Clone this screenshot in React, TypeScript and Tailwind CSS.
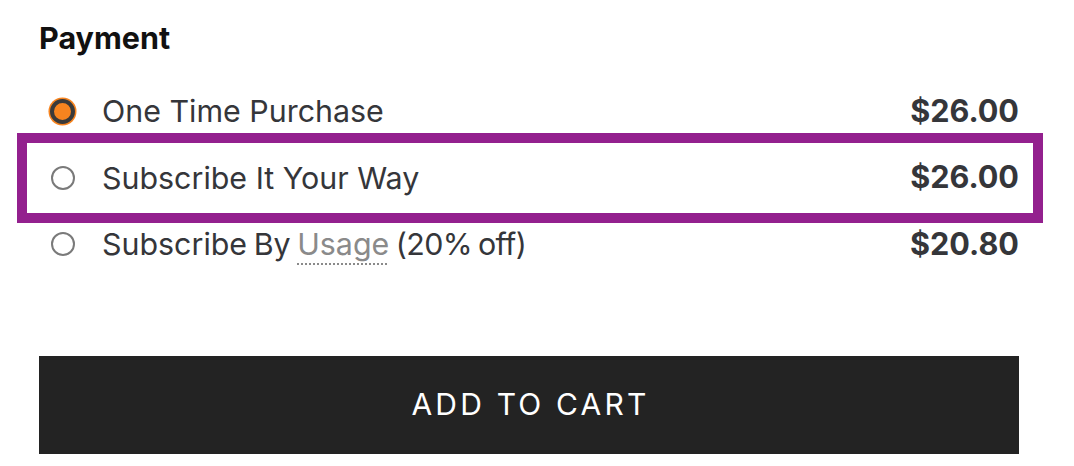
import { useState } from 'react';

interface PaymentOption {
  id: string;
  price: string;
}

const options: PaymentOption[] = [
  { id: 'once', price: '$26.00' },
  { id: 'subscribe', price: '$26.00' },
  { id: 'usage', price: '$20.80' },
];

const Radio = ({ checked }: { checked: boolean }) =>
  checked ? (
    <span className="block h-[25px] w-[25px] shrink-0 rounded-full border-[4px] border-[#3a3a3a] bg-[#f7841f] shadow-[0_0_0_1.5px_#f7841f]" />
  ) : (
    <span className="block h-[24px] w-[24px] shrink-0 rounded-full border-2 border-[#7a7a7a] bg-white" />
  );

const OptionLabel = ({ id }: { id: string }) => {
  if (id === 'once') return <>One Time Purchase</>;
  if (id === 'subscribe') return <>Subscribe It Your Way</>;
  return (
    <span className="[word-spacing:-2px]">
      Subscribe By{' '}
      <span className="text-[#8a8a8a] underline decoration-dotted decoration-[#8a8a8a] decoration-2 underline-offset-[8px]">
        Usage
      </span>{' '}
      <span className="tracking-[-0.6px]">(20% off)</span>
    </span>
  );
};

export default function App() {
  const [selected, setSelected] = useState('once');
  const highlighted = 'subscribe';

  return (
    <div className="min-h-screen bg-white font-['Inter',sans-serif]">
      <div className="ml-[39px] w-[980px] pt-[18px]">
        <h2 className="h-[40px] text-[30.5px] font-bold leading-[40px] text-[#111]">Payment</h2>

        <div className="mt-[20px] flex flex-col">
          {options.map((opt) => (
            <label
              key={opt.id}
              onClick={() => setSelected(opt.id)}
              className="relative flex h-[66.5px] cursor-pointer items-center"
            >
              {opt.id === highlighted && (
                <span className="pointer-events-none absolute -top-[12px] -bottom-[12px] -left-[22px] -right-[24px] border-[10px] border-[#93208e]" />
              )}
              <span className="ml-[11px] flex w-[25px] justify-center">
                <Radio checked={selected === opt.id} />
              </span>
              <span className="ml-[27px] flex-1 text-[30.4px] leading-none text-[#35363a]">
                <OptionLabel id={opt.id} />
              </span>
              <span className="text-[30.6px] font-bold leading-none text-[#35363a]">{opt.price}</span>
            </label>
          ))}
        </div>

        <button className="mt-[78px] flex h-[98px] w-full items-center justify-center bg-[#232323] pl-[3px] text-[30px] uppercase tracking-[3.2px] text-white">
          Add to Cart
        </button>
      </div>
    </div>
  );
}
